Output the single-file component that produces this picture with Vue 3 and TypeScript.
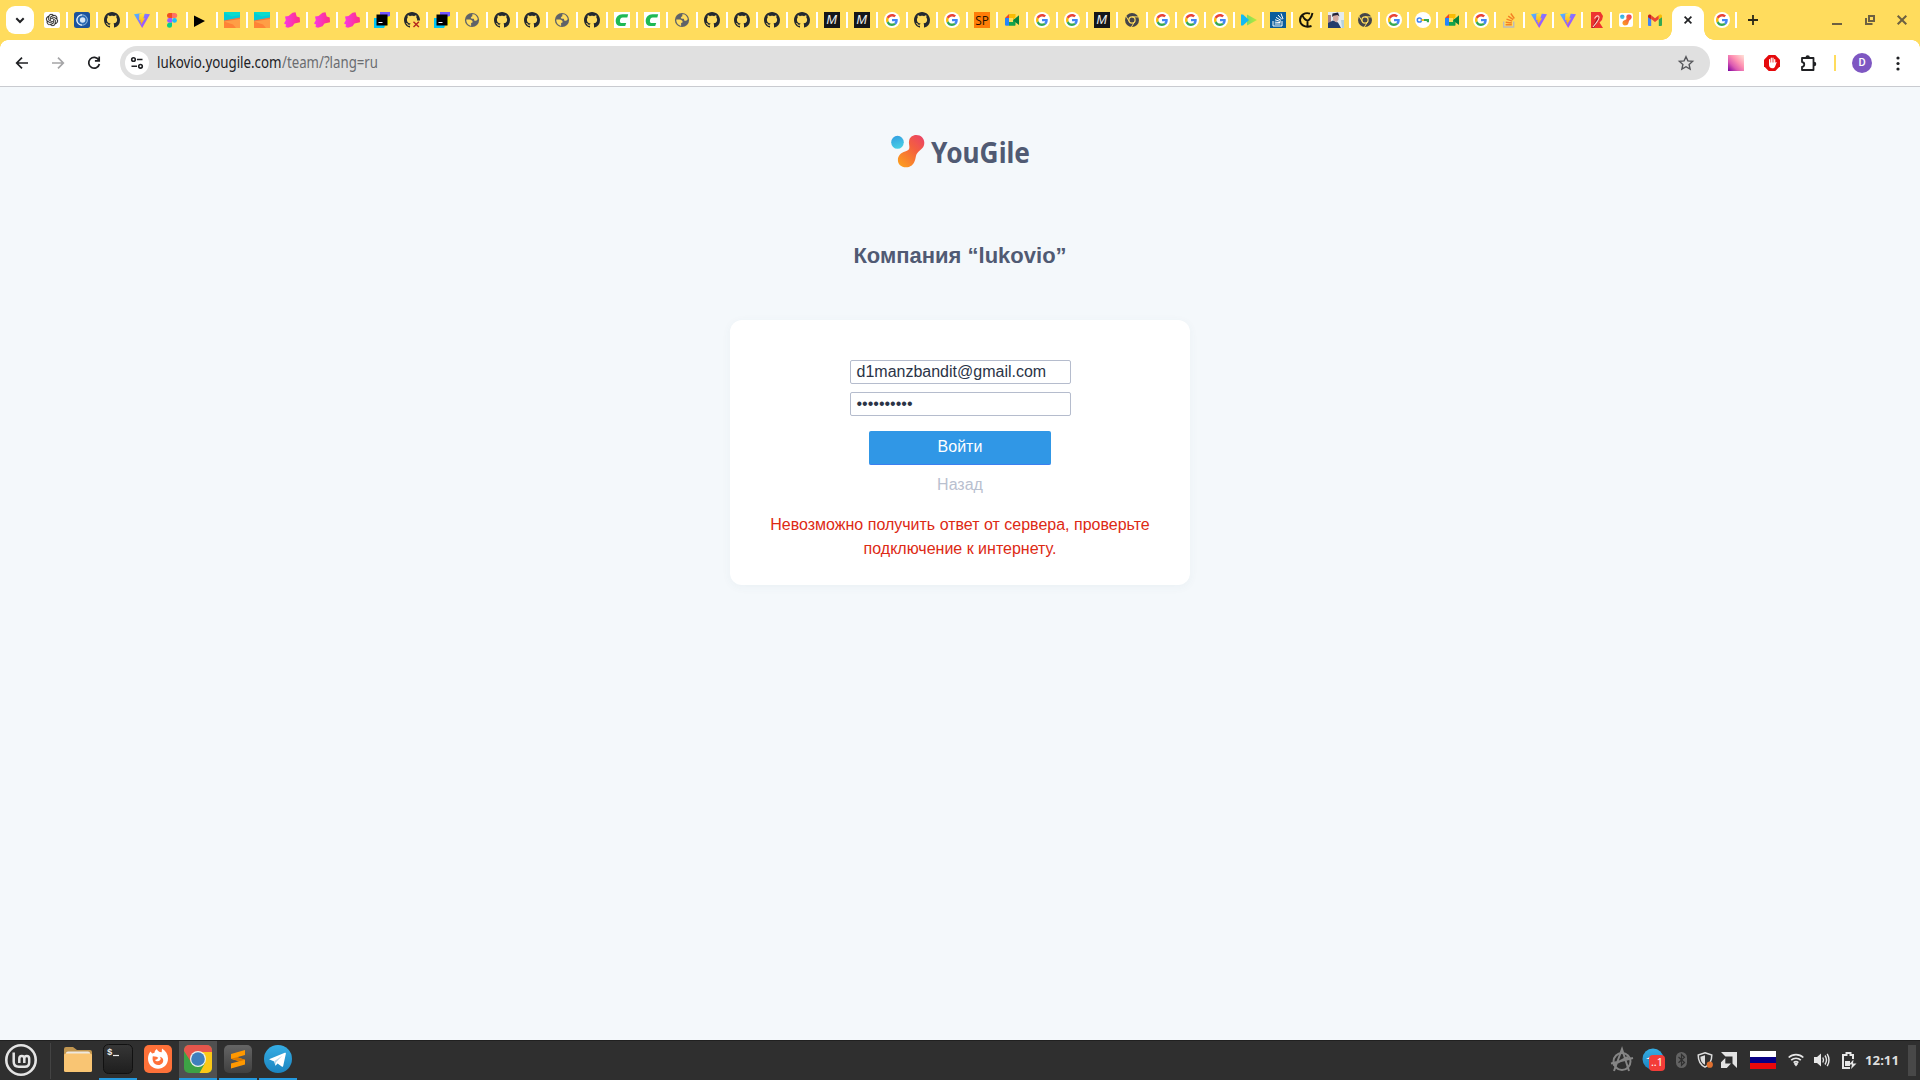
<script setup lang="ts">
import { ref } from 'vue'

const icons: string[] = [
  'gpt', 'orbit', 'github', 'vite', 'figma', 'play', 'poly', 'poly', 'pink', 'pink',
  'pink', 'jb', 'githubx', 'jb', 'globe', 'github', 'github', 'globe', 'github', 'ci',
  'ci', 'globe', 'github', 'github', 'github', 'github', 'mm', 'mm', 'google', 'github',
  'google', 'sp', 'meet', 'google', 'google', 'mm', 'chromium', 'google', 'google', 'google',
  'stream', 'stack', 'yc', 'photo', 'chromium', 'google', 'key', 'meet', 'google', 'overflow',
  'vite', 'vite', 'rocket', 'yougile', 'gmail',
]
const firstNarrow = 37
const email = ref('d1manzbandit@gmail.com')
const password = ref('••••••••••')
</script>

<template>
  <div class="screen">
    <svg class="defs" width="0" height="0" aria-hidden="true">
      <defs>
        <linearGradient id="gv" x1="0" y1="0" x2="1" y2="1"><stop offset="0" stop-color="#41c8ff" /><stop offset=".5" stop-color="#8c6cff" /><stop offset="1" stop-color="#bd34fe" /></linearGradient>
        <linearGradient id="gy" x1="0" y1="0" x2="0" y2="1"><stop offset="0" stop-color="#ffea45" /><stop offset="1" stop-color="#ffa800" /></linearGradient>
        <linearGradient id="gp" x1="0" y1="0" x2="1" y2="0"><stop offset="0" stop-color="#f838e8" /><stop offset="1" stop-color="#ff2f80" /></linearGradient>
        <linearGradient id="gr" x1="1" y1="0" x2=".2" y2="1"><stop offset="0" stop-color="#e9406a" /><stop offset=".45" stop-color="#f4603f" /><stop offset="1" stop-color="#fc9b20" /></linearGradient>
        <linearGradient id="gb" x1=".3" y1="0" x2=".6" y2="1"><stop offset="0" stop-color="#33a0e2" /><stop offset="1" stop-color="#48d0e4" /></linearGradient>
        <linearGradient id="gt" x1="0" y1="0" x2="0" y2="1"><stop offset="0" stop-color="#35ade4" /><stop offset="1" stop-color="#1b84c0" /></linearGradient>
        <linearGradient id="gs" x1="0" y1="0" x2="0" y2="1"><stop offset="0" stop-color="#656565" /><stop offset="1" stop-color="#404040" /></linearGradient>
        <linearGradient id="gk" x1="0" y1="0" x2="0" y2="1"><stop offset="0" stop-color="#363636" /><stop offset="1" stop-color="#1e1e1e" /></linearGradient>
        <linearGradient id="gst" x1="0" y1="0" x2="1" y2="0"><stop offset="0" stop-color="#7ddb63" /><stop offset="1" stop-color="#b9ea38" /></linearGradient>
        <clipPath id="tile"><rect x="1" y="1" width="28" height="28" rx="5" /></clipPath>
      </defs>
      <symbol id="i-gpt" viewBox="0 0 16 16">
        <rect width="16" height="16" rx="2" fill="#fff" />
        <path transform="translate(2 2) scale(.5)" fill="#222" stroke="#222" stroke-width=".4" d="M22.2819 9.8211a5.9847 5.9847 0 0 0-.5157-4.9108 6.0462 6.0462 0 0 0-6.5098-2.9A6.0651 6.0651 0 0 0 4.9807 4.1818a5.9847 5.9847 0 0 0-3.9977 2.9 6.0462 6.0462 0 0 0 .7427 7.0966 5.98 5.98 0 0 0 .511 4.9107 6.051 6.051 0 0 0 6.5146 2.9001A5.9847 5.9847 0 0 0 13.2599 24a6.0557 6.0557 0 0 0 5.7718-4.2058 5.9894 5.9894 0 0 0 3.9977-2.9001 6.0557 6.0557 0 0 0-.7475-7.0729zm-9.022 12.6081a4.4755 4.4755 0 0 1-2.8764-1.0408l.1419-.0804 4.7783-2.7582a.7948.7948 0 0 0 .3927-.6813v-6.7369l2.02 1.1686a.071.071 0 0 1 .038.052v5.5826a4.504 4.504 0 0 1-4.4945 4.4944zm-9.6607-4.1254a4.4708 4.4708 0 0 1-.5346-3.0137l.142.0852 4.783 2.7582a.7712.7712 0 0 0 .7806 0l5.8428-3.3685v2.3324a.0804.0804 0 0 1-.0332.0615L9.74 19.9502a4.4992 4.4992 0 0 1-6.1408-1.6464zM2.3408 7.8956a4.485 4.485 0 0 1 2.3655-1.9728V11.6a.7664.7664 0 0 0 .3879.6765l5.8144 3.3543-2.0201 1.1685a.0757.0757 0 0 1-.071 0l-4.8303-2.7865A4.504 4.504 0 0 1 2.3408 7.872zm16.5963 3.8558L13.1038 8.364 15.1192 7.2a.0757.0757 0 0 1 .071 0l4.8303 2.7913a4.4944 4.4944 0 0 1-.6765 8.1042v-5.6772a.79.79 0 0 0-.407-.667zm2.0107-3.0231l-.142-.0852-4.7735-2.7818a.7759.7759 0 0 0-.7854 0L9.409 9.2297V6.8974a.0662.0662 0 0 1 .0284-.0615l4.8303-2.7866a4.4992 4.4992 0 0 1 6.6802 4.66zM8.3065 12.863l-2.02-1.1638a.0804.0804 0 0 1-.038-.0567V6.0742a4.4992 4.4992 0 0 1 7.3757-3.4537l-.142.0805L8.704 5.459a.7948.7948 0 0 0-.3927.6813zm1.0976-2.3654l2.602-1.4998 2.6069 1.4998v2.9994l-2.5974 1.4997-2.6067-1.4997Z" />
      </symbol>
      <symbol id="i-orbit" viewBox="0 0 16 16">
        <rect width="16" height="16" rx="2.5" fill="#1b539c" />
        <circle cx="8.2" cy="8" r="5.2" fill="#2b6bb4" stroke="#8db8e0" stroke-width="1" />
        <path d="M8 2.8a5.2 5.2 0 0 0 0 10.4" fill="none" stroke="#e8f2fa" stroke-width="1.2" />
        <circle cx="8.600" cy="8" r="2.700" fill="#d6e7f6" />
      </symbol>
      <symbol id="i-github" viewBox="0 0 16 16">
        <path fill="#24292f" d="M8 0C3.58 0 0 3.58 0 8c0 3.54 2.29 6.53 5.47 7.59.4.07.55-.17.55-.38 0-.19-.01-.82-.01-1.49-2.01.37-2.53-.49-2.69-.94-.09-.23-.48-.94-.82-1.13-.28-.15-.68-.52-.01-.53.63-.01 1.08.58 1.23.82.72 1.21 1.87.87 2.33.66.07-.52.28-.87.51-1.07-1.78-.2-3.64-.89-3.64-3.95 0-.87.31-1.59.82-2.15-.08-.2-.36-1.02.08-2.12 0 0 .67-.21 2.2.82.64-.18 1.32-.27 2-.27s1.36.09 2 .27c1.53-1.04 2.2-.82 2.2-.82.44 1.1.16 1.92.08 2.12.51.56.82 1.27.82 2.15 0 3.07-1.87 3.75-3.65 3.95.29.25.54.73.54 1.48 0 1.07-.01 1.93-.01 2.2 0 .21.15.46.55.38A8.01 8.01 0 0 0 16 8c0-4.42-3.58-8-8-8z" />
      </symbol>
      <symbol id="i-githubx" viewBox="0 0 16 16">
        <use href="#i-github" width="16" height="16" />
        <rect x="8" y="8.5" width="8" height="7.5" fill="#ffdc5d" />
        <path d="M9.5 9.8l5.4 5.2M14.9 9.8L9.5 15" stroke="#b3261e" stroke-width="1.4" />
      </symbol>
      <symbol id="i-vite" viewBox="0 0 16 16">
        <path d="M0 2.2l6.9-1 9.1 1L8.2 16z" fill="url(#gv)" />
        <path d="M11 .6L5.4 1.7 5 8.2l1.7-.4-.6 2.5 1.2-.3-.6 3.2L11 6.2l-1.7.3L11 .6z" fill="url(#gy)" />
      </symbol>
      <symbol id="i-figma" viewBox="0 0 16 16">
        <path d="M8 1H5.5a2.5 2.5 0 0 0 0 5H8z" fill="#f24e1e" />
        <path d="M8 1h2.7a2.5 2.5 0 0 1 0 5H8z" fill="#ff7262" />
        <path d="M8 6H5.5a2.4 2.4 0 0 0 0 4.8H8z" fill="#a259ff" />
        <circle cx="10.5" cy="8.4" r="2.4" fill="#1abcfe" />
        <path d="M8 10.8H5.5A2.5 2.5 0 1 0 8 13.3z" fill="#0acf83" />
      </symbol>
      <symbol id="i-play" viewBox="0 0 16 16"><path d="M0 3.4L11 9 0 15z" fill="#000" /></symbol>
      <symbol id="i-poly" viewBox="0 0 16 16">
        <path d="M0 0h16v6L0 9z" fill="#08dccb" /><path d="M0 1l8 3.500 8-1.500v3L0 9z" fill="#06c9d6" />
        <path d="M0 9l16-3v10H0z" fill="#ff9e45" /><path d="M0 9.500l9 3L12 16H0z" fill="#ff8336" /><path d="M0 8.500l16-3V7L0 9.500z" fill="#f3783d" />
      </symbol>
      <symbol id="i-pink" viewBox="0 0 16 16"><path d="M1 4.500L4.500 4 8.500.8l3-.6 1.200 4.300 3 1 .3 4.800-5.500 1.200-2 2.700-4.500 1.600-2.500-.8L2 12.500 0 11.500l1.800-3.200z" fill="url(#gp)" /></symbol>
      <symbol id="i-jb" viewBox="0 0 16 16">
        <path d="M6 0h10v6l-2 3-8-2z" fill="#7256ff" /><path d="M0 6h5l6 8-1 2H0z" fill="#00c4f4" /><path d="M12 5l4-1v7l-5 4z" fill="#f7ee10" />
        <rect x="2.5" y="2.5" width="11" height="11" /><path d="M4.5 10.500h4" stroke="#fff" />
      </symbol>
      <symbol id="i-globe" viewBox="0 0 16 16">
        <circle cx="8" cy="8" r="7.1" fill="#5f6368" />
        <path d="M2.300 7.500h3.800c1 0 1.400 1 2.400 1.400v1.500l-1.400.7v2.800c-2.900-.7-5-3.200-4.800-6.400zM8 2.400l2-.2c2 .8 3.400 2.600 3.800 5l-1.600 1.600H10.400L9.800 6.700H7.500L6.800 5.200 8.500 4z" fill="#ffdc5d" />
      </symbol>
      <symbol id="i-ci" viewBox="0 0 16 16"><rect width="16" height="16" fill="#fff" /><path d="M14.200 2.200H8.500C4.200 2.200 1.700 5.200 1.700 9.300c0 3 1.800 4.700 4.800 4.700h4.700l1-3H7.800c-1.300 0-1.900-.7-1.900-1.800 0-2.200 1-3.700 2.900-3.700h4.500z" fill="#1eb955" /></symbol>
      <symbol id="i-google" viewBox="0 0 16 16">
        <circle cx="8" cy="8" r="8" fill="#fff" />
        <g transform="translate(2 2) scale(.25)">
          <path fill="#EA4335" d="M24 9.500c3.540 0 6.710 1.220 9.210 3.600l6.850-6.850C35.900 2.380 30.470 0 24 0 14.620 0 6.510 5.380 2.560 13.220l7.980 6.190C12.430 13.720 17.740 9.500 24 9.500z" />
          <path fill="#4285F4" d="M46.980 24.550c0-1.570-.15-3.090-.38-4.550H24v9.020h12.940c-.58 2.960-2.260 5.480-4.780 7.180l7.730 6c4.510-4.180 7.090-10.360 7.090-17.650z" />
          <path fill="#FBBC05" d="M10.530 28.590c-.48-1.450-.76-2.990-.76-4.590s.27-3.140.76-4.590l-7.980-6.190C.92 16.460 0 20.120 0 24c0 3.880.92 7.540 2.560 10.780l7.970-6.190z" />
          <path fill="#34A853" d="M24 48c6.480 0 11.930-2.130 15.890-5.810l-7.730-6c-2.150 1.450-4.920 2.300-8.160 2.300-6.260 0-11.570-4.220-13.470-9.910l-7.980 6.190C6.510 42.620 14.620 48 24 48z" />
        </g>
      </symbol>
      <symbol id="i-meet" viewBox="0 0 16 16">
        <path d="M1 6l4-4v4z" fill="#ea4335" /><path d="M5 2h6.500v3.500L9 8V6H5z" fill="#fbbc04" /><path d="M1 6h4v7.700H2.300A1.300 1.300 0 0 1 1 12.400z" fill="#2684fc" />
        <path d="M5 10h4V8l2.500-1.500v6.300c0 .6-.3 1-1 1H5z" fill="#13a34c" /><path d="M9.500 8L15 3.200v9.900L11 10z" fill="#08833b" /><path d="M5 6h4v4H5z" fill="#ffdc5d" />
      </symbol>
      <symbol id="i-chromium" viewBox="0 0 16 16">
        <circle cx="8" cy="8" r="7" fill="#45454a" />
        <circle cx="8" cy="8" r="3.100" fill="none" stroke="#ffdc5d" stroke-width="1.200" />
        <path d="M8 4.900h6.800M5.300 9.600L1.900 4M10.700 9.600L7.400 15" stroke="#ffdc5d" stroke-width="1" />
      </symbol>
      <symbol id="i-stream" viewBox="0 0 16 16"><path d="M6 2.500L16 8 6 13.500z" fill="url(#gst)" /><path d="M0 2.500h2l6 5.500-6 5.500H0z" fill="#12b9f2" /></symbol>
      <symbol id="i-stack" viewBox="0 0 16 16">
        <rect width="16" height="16" fill="#0b5c9c" />
        <path d="M3 9v5h9V9M4.700 12h5.800M4.700 10.100l5.800.5M5 7.800l5.600 1.700M6 5.400l5 3M8 3l4 4.500M11 1.500l2 5.500" fill="none" stroke="#fff" stroke-width="1" />
      </symbol>
      <symbol id="i-yc" viewBox="0 0 16 16"><path d="M11 1.600C6 0 1 3 1 8s5 8.200 11.500 6M3.500 3.500C5 7 7.500 8.500 8.500 8.500S12.500 6 13.500 1M8.500 8v6" fill="none" stroke="#15130a" stroke-width="1.900" /></symbol>
      <symbol id="i-photo" viewBox="0 0 16 16">
        <rect width="16" height="16" fill="#e4ecf0" /><path d="M0 3h3v9H0z" fill="#a77f85" /><path d="M0 11l5-2.500 5 2 3 5.500H0z" fill="#233d6b" />
        <path d="M5 3h5.500v4.500l-2 3L5 8z" fill="#d3a9a0" /><path d="M4 5l.5-3.500L10 .5l1.500 4-2-1.500-4 .8z" fill="#222337" /><path d="M13 8h3v8h-2z" fill="#b4d1df" />
      </symbol>
      <symbol id="i-key" viewBox="0 0 16 16">
        <circle cx="8" cy="8" r="8" fill="#fff" /><circle cx="4.400" cy="8" r="2.100" fill="none" stroke="#4285f4" stroke-width="1.500" />
        <path d="M6.500 7.100H9v1.800H6.500z" fill="#fbbc04" /><path d="M9 7.100h5v3.200h-2.200V8.900H9z" fill="#34a853" />
      </symbol>
      <symbol id="i-overflow" viewBox="0 0 16 16">
        <path d="M1.700 9.500V15h10V9.500" fill="none" stroke="#bcbbbb" stroke-width="1.400" />
        <path d="M3.600 12.700h6.200M3.700 10.300l6.200.7M4.500 7.200l5.700 2M6.200 4.100l5 3.500M8.800 1.500l3.500 5" stroke="#f48024" stroke-width="1.400" />
      </symbol>
      <symbol id="i-rocket" viewBox="0 0 16 16">
        <path d="M2 0h9.500L14 4l-1 4-2.500 2.500L14 16H2z" fill="#ee3430" /><path d="M8 5.500L10 7l-5 9H3z" fill="#a71929" /><path d="M5.500 6.500Q8 2.800 9.800 4.300T4 15" fill="none" stroke="#ffd9cc" stroke-width="1.100" />
      </symbol>
      <symbol id="i-logo" viewBox="0 0 34 33">
        <ellipse cx="6.500" cy="7.300" rx="6.300" ry="6.500" fill="url(#gb)" />
        <path d="M25.300 0c4.800 0 8 3.500 8 7.700 0 5-3.500 6.500-6.500 9.700-2.300 2.500-1.600 4.800-3.100 8.500-1.600 4-4.300 6.300-8.800 6.300-4.800 0-8-3-8-7.300 0-4.600 3.100-7.200 7.200-8.500 2.800-.9 4.200-1.400 4.300-4.100.1-2.500-.9-4-.3-6.600C18.700 2.300 21.500 0 25.300 0z" fill="url(#gr)" />
      </symbol>
      <symbol id="i-yougile" viewBox="0 0 16 16"><rect x="1" y="1" width="14" height="14" rx="2" fill="#fff" /><use href="#i-logo" x="2" y="2.200" width="12" height="11.600" /></symbol>
      <symbol id="i-gmail" viewBox="0 0 16 16">
        <path d="M1 4.600l3.200 2.300V14H2a1 1 0 0 1-1-1z" fill="#4285f4" /><path d="M15 4.600l-3.200 2.300V14H14a1 1 0 0 0 1-1z" fill="#34a853" />
        <path d="M4.200 3.300L8 6.200l3.800-2.900v3.800L8 10 4.200 7.100z" fill="#ea4335" /><path d="M1 4v1.200l3.200 2.300V3.300l-.6-.5C2.500 2 1 2.700 1 4z" fill="#c5221f" /><path d="M15 4v1.200l-3.200 2.300V3.300l.6-.5C13.500 2 15 2.700 15 4z" fill="#fbbc04" />
      </symbol>
    </svg>

    <header class="tabs">
      <button class="tabsearch"><svg width="10" height="7" viewBox="0 0 10 7"><path d="M1.300 1.300L5 5l3.700-3.700" fill="none" stroke="#202124" stroke-width="2" /></svg></button>
      <div class="strip">
        <div v-for="(icon, i) in icons" :key="i" class="tab" :class="{ narrow: i >= firstNarrow }">
          <svg v-if="icon === 'sp'" class="spfav" width="16" height="16"><rect width="16" height="16" fill="#ff7d08" /><text x="1.200" y="12.800" textLength="13.600" lengthAdjust="spacingAndGlyphs">SP</text></svg>
          <svg v-else-if="icon === 'mm'" class="mmfav" width="16" height="16"><rect width="16" height="16" fill="#14161a" /><text x="2.500" y="12.400" textLength="10.500" lengthAdjust="spacingAndGlyphs">M</text></svg>
          <svg v-else class="fav" width="16" height="16"><use :href="'#i-' + icon" width="16" height="16" /></svg>
          <i v-if="i < icons.length - 1" class="sep" />
        </div>
      </div>
      <div class="active">
        <svg class="close" width="8" height="8" viewBox="0 0 8 8"><path d="M.6.6l6.800 6.800M7.400.6L.6 7.400" stroke="#202124" stroke-width="1.700" /></svg>
      </div>
      <svg class="last" width="16" height="16"><use href="#i-google" width="16" height="16" /></svg>
      <i class="lastsep" />
      <svg class="plus" width="12" height="12" viewBox="0 0 12 12"><path d="M6 1v10M1 6h10" stroke="#2b2718" stroke-width="1.800" /></svg>
      <div class="winctl">
        <svg width="10" height="12" viewBox="0 0 10 12"><path d="M0 10h10" stroke="#6d6041" stroke-width="2" /></svg>
        <svg width="10" height="12" viewBox="0 0 10 12"><path d="M4 2h5v5H4zM1 4v6h6.500" fill="none" stroke="#6d6041" stroke-width="2" /></svg>
        <svg width="10" height="12" viewBox="0 0 10 12"><path d="M.7 1.700l8.600 8.600M9.300 1.700L.7 10.300" stroke="#6d6041" stroke-width="2" /></svg>
      </div>
    </header>

    <nav class="toolbar">
      <svg class="nav" width="16" height="16" viewBox="0 0 16 16"><path d="M14 8H3M8 2.700L2.700 8 8 13.300" fill="none" stroke="#1f2023" stroke-width="1.700" /></svg>
      <svg class="nav fwd" width="16" height="16" viewBox="0 0 16 16"><path d="M2 8h11M8 2.700L13.300 8 8 13.300" fill="none" stroke="#a5a5a7" stroke-width="1.700" /></svg>
      <svg class="nav" width="16" height="16" viewBox="0 0 16 16"><path d="M12.800 5A5.400 5.400 0 1 0 13.400 9M13.200 1.500v4.300H8.900" fill="none" stroke="#1f2023" stroke-width="1.700" /></svg>
      <div class="omnibox">
        <span class="site"><svg width="14" height="14" viewBox="0 0 14 14"><g fill="none" stroke="#1f2023" stroke-width="1.600"><circle cx="3.500" cy="3.500" r="1.800" /><path d="M7 3.500h5.500M1.500 10.300H7" /><circle cx="10.500" cy="10.300" r="1.800" /></g></svg></span>
        <svg class="url host" width="125" height="24"><text x="0" y="17" textLength="124.500" lengthAdjust="spacingAndGlyphs">lukovio.yougile.com</text></svg>
        <svg class="url path" width="98" height="24"><text x="0" y="17" textLength="96" lengthAdjust="spacingAndGlyphs">/team/?lang=ru</text></svg>
        <svg class="star" width="16" height="16" viewBox="0 0 16 16"><path d="M8 1.700l1.900 4.200 4.700.5-3.500 3.100 1 4.600L8 11.700l-4.100 2.400 1-4.600-3.500-3.100 4.700-.5z" fill="none" stroke="#55565a" stroke-width="1.400" /></svg>
      </div>
      <span class="ext1" />
      <svg class="ext2" width="16" height="16" viewBox="0 0 16 16">
        <path d="M4.700 0h6.600L16 4.700v6.600L11.300 16H4.700L0 11.300V4.700z" fill="#e5090c" />
        <path d="M5.600 8.500V4.600M7.300 8V3.200M9 8V3.200M10.700 8.500V4.600" stroke="#fff" stroke-width="1.200" stroke-linecap="round" /><path d="M5 7.500h6.300l1.500-.5-1.500 4c-.5 1.500-1.400 2.300-3 2.300-2.100 0-3.300-1.500-3.300-3.500z" fill="#fff" />
      </svg>
      <svg class="ext3" width="17" height="17" viewBox="0 0 17 17"><path d="M2 3h11.500v12H2v-3.200c3-.5 3-4.300 0-4.800z" fill="none" stroke="#1f2023" stroke-width="1.800" stroke-linejoin="round" /><path d="M5.500 2.500a2.200 2.200 0 0 1 4.400 0zM14 6.700a2.300 2.300 0 0 1 0 4.600z" fill="#1f2023" /></svg>
      <i class="bar" />
      <span class="avatar">D</span>
      <svg class="kebab" width="4" height="15" viewBox="0 0 4 15"><circle cx="2" cy="2" r="1.600" /><circle cx="2" cy="7.500" r="1.600" /><circle cx="2" cy="13" r="1.600" /></svg>
    </nav>

    <main class="page">
      <div class="brand">
        <svg class="mark" width="34" height="33"><use href="#i-logo" width="34" height="33" /></svg>
        <svg class="word" width="102" height="36"><text x="1" y="28" textLength="99" lengthAdjust="spacingAndGlyphs">YouGile</text></svg>
      </div>
      <h1>Компания “lukovio”</h1>
      <section class="card">
        <div class="field">{{ email }}</div>
        <div class="field pass">{{ password }}</div>
        <button class="login">Войти</button>
        <a class="back">Назад</a>
        <p class="error">Невозможно получить ответ от сервера, проверьте подключение к интернету.</p>
      </section>
    </main>

    <footer class="panel">
      <svg class="mint" width="32" height="32" viewBox="0 0 32 32"><g fill="none" stroke="#e4e4e4"><circle cx="16" cy="16" r="14.700" stroke-width="2.600" /><path d="M8.700 8.500v9.200c0 3.200 1.800 5 5 5h6.200c3 0 4.300-1.800 4.300-4.500v-3.500c0-1.600-1-2.600-2.400-2.600-1.500 0-2.500 1-2.500 2.600V19m0-4.300c0-1.600-1-2.600-2.500-2.600s-2.500 1-2.500 2.600V19" stroke-width="2.500" /></g></svg>
      <i class="div" />
      <div class="task"><svg width="30" height="30" viewBox="0 0 30 30"><path d="M1 5q0-2 2-2h7l4 3h13q2 0 2 2v8H1z" fill="#c19650" /><path d="M3 9q0-1.500 2-1.500h20q2 0 2 1.500v5H3z" fill="#eee8de" /><rect x="1" y="9.500" width="28" height="18.500" rx="1.500" fill="#f9c573" /></svg></div>
      <div class="task on"><svg width="30" height="30" viewBox="0 0 30 30"><rect x=".5" y=".5" width="29" height="29" rx="5" fill="url(#gk)" stroke="#111" /><text x="4" y="11" font-family="Liberation Mono, monospace" font-weight="700" font-size="9" fill="#eee">$</text><path d="M10 11.500h6" stroke="#eee" stroke-width="1.200" /></svg></div>
      <div class="task"><svg width="30" height="30" viewBox="0 0 30 30"><rect x="1" y="1" width="28" height="28" rx="5" fill="#ff7139" /><path d="M7.500 7.500l1.700 2 2.300-.8c.2-1.700 1-2.800 2.400-3.700.4 1.500 1.500 2.300 3 3l1.800.2.300-3.700c3.800 2.200 6 5.700 6 9.900 0 6-4.500 10.300-10 10.300S5 20.500 5 14.700c0-2.900.9-5.200 2.500-7.200z" fill="#fff" /><path d="M9.800 12.300l3.700.4 1.800 1.100-1.300 1.500-2 .6c.8 1.600 3.600 1.900 5 .4 1-1.100.9-2.500-.3-3.500 3.200.6 4.200 3.200 3.200 5.400-.9 1.900-2.700 2.800-4.800 2.800-3.900 0-6.300-3.900-5.300-8.700z" fill="#ff7139" /></svg></div>
      <div class="task on current"><svg width="30" height="30" viewBox="0 0 30 30"><g clip-path="url(#tile)"><rect width="30" height="30" fill="#3da245" /><path d="M0 0h30v8H15L8 18 1 7z" fill="#e6564c" /><path d="M15 8h15v22H16l6-11z" fill="#fbc817" /></g><circle cx="15" cy="15" r="8" fill="#eef2ec" /><circle cx="15" cy="15" r="6.800" fill="#3f7fbd" /></svg></div>
      <div class="task on"><svg width="30" height="30" viewBox="0 0 30 30"><rect x="1" y="1" width="28" height="28" rx="5" fill="url(#gs)" /><path d="M8 9.900l14-4v5l-8 2.300 8 2.500v4.900L8 24.600v-5l8-2.300-8-2.500z" fill="#ff9800" /><path d="M8 14.800l6-1.600 8 2.500-5 1.600z" fill="#d97700" /></svg></div>
      <div class="task on"><svg width="30" height="30" viewBox="0 0 30 30"><circle cx="15" cy="15" r="14" fill="url(#gt)" /><path d="M6 15.300L21.800 8.800c.8-.3 1.300.1 1 1.100l-2.600 12c-.2.900-.8 1.100-1.500.7l-4.100-3-2.200 2.200-1.200-4.400z" fill="#fff" /><path d="M11.500 17l8-5.500-6.500 6.700-.3 3.400z" fill="#b8d9ec" /></svg></div>
      <div class="tray">
        <svg class="t1" width="24" height="24" viewBox="0 0 24 24"><g fill="none" stroke="#858585"><circle cx="12" cy="13.500" r="8.500" stroke-width="2" /><path d="M4 23L12 1l7 22M1 15.500l22-5.500M3 17l15-8" stroke-width="2" /></g></svg>
        <div class="t2"><svg width="22" height="22" viewBox="0 0 22 22"><circle cx="11" cy="11" r="10.500" fill="url(#gt)" /><path d="M4 11l8-4v4z" fill="#fff" /></svg><span>..1</span></div>
        <svg class="t3" width="11" height="16" viewBox="0 0 11 16"><rect width="11" height="16" rx="5.500" fill="#626262" /><path d="M2.500 5l6 5.500-3 2.800V2.500l3 2.800-6 5.400" fill="none" stroke="#303030" stroke-width="1.200" /></svg>
        <svg class="t4" width="16" height="16" viewBox="0 0 16 16"><path d="M8 .8l6.800 2.300c0 6-1.800 9.800-6.800 12-5-2.200-6.800-6-6.800-12z" fill="#2f2f2f" stroke="#ddd" stroke-width="1.500" /><path d="M8 3.300L3.400 4.800c.2 4 1.300 6.400 4.600 8z" fill="#ddd" /><circle cx="12.800" cy="12.700" r="3.100" fill="#df7030" /></svg>
        <svg class="t5" width="16" height="16" viewBox="0 0 16 16"><path d="M0 0h16v16l-4.500-4.500v-7h-7zM4.300 6v5.500H10L5.800 16H0v-5.800z" fill="#e3e3e3" /></svg>
        <div class="flag"><i /><i /><i /></div>
        <svg class="t6" width="16" height="14" viewBox="0 0 16 14"><path d="M.7 4.500a10.500 10.500 0 0 1 14.600 0M3.200 7.200a6.900 6.900 0 0 1 9.600 0M5.600 9.600a3.600 3.600 0 0 1 4.800 0" fill="none" stroke="#e6e6e6" stroke-width="1.700" /><path d="M5.800 10.800L8 13.500l2.200-2.700C9 9.500 7 9.500 5.800 10.800z" fill="#e6e6e6" /></svg>
        <svg class="t7" width="16" height="14" viewBox="0 0 16 14"><path d="M0 4h3l4-3.500v13L3 10H0z" fill="#e6e6e6" /><path d="M8.800 4.500q1.500 2.500 0 5M11 2.500q3 4.500 0 9M13.200.8q3.600 6.200 0 12.400" fill="none" stroke="#e6e6e6" stroke-width="1.400" /></svg>
        <svg class="t8" width="15" height="17" viewBox="0 0 15 17"><path d="M11 7V3H8.500V1h-4v2H1v13h7" fill="none" stroke="#e6e6e6" stroke-width="2" /><path d="M3 9h5v5H3z" fill="#e6e6e6" /><path d="M11.500 7.500L7 12.500h3L9 17l5.500-5.500H11z" fill="#e6e6e6" /></svg>
        <svg class="clock" width="35" height="20"><text x="0" y="15" textLength="34" lengthAdjust="spacingAndGlyphs">12:11</text></svg>
        <i class="show" />
      </div>
    </footer>
  </div>
</template>

<style>
body { margin: 0; overflow: hidden; }
</style>

<style scoped>
.screen { width: 1920px; height: 1080px; display: flex; flex-direction: column; background: #f4f8fb; font-family: "Liberation Sans", Arial, sans-serif; overflow: hidden; }
.screen svg { display: block; flex: none; overflow: visible; }
.defs { position: absolute; }
button { border: 0; padding: 0; font: inherit; }
.tabs { height: 40px; flex: none; background: #ffdc5d; display: flex; align-items: center; }
.tabsearch { width: 28px; height: 28px; margin: 0 10px 0 6px; border-radius: 9px; background: #fff; display: flex; align-items: center; justify-content: center; flex: none; }
.strip { display: flex; flex: none; width: 1628px; }
.tab { width: 30px; flex: none; display: flex; align-items: center; }
.tab.narrow { width: 29px; }
.spfav { font: 12.5px "Open Sans", sans-serif; fill: #231000; }
.spfav text { fill: #231000; }
.mmfav { font: italic 12.5px "Liberation Sans", sans-serif; }
.mmfav text { fill: #f0f0f0; }
.sep, .lastsep { width: 2px; height: 16px; background: #fff; margin-left: 6px; flex: none; }
.narrow .sep { margin-left: 5px; }
.active { position: relative; width: 32px; height: 34px; align-self: flex-end; background: #fff; border-radius: 9px 9px 0 0; display: flex; justify-content: center; flex: none; }
.active::before, .active::after { content: ""; position: absolute; bottom: 0; width: 10px; height: 10px; }
.active::before { left: -10px; background: radial-gradient(circle at 0 0, transparent 9.5px, #fff 10px); }
.active::after { right: -10px; background: radial-gradient(circle at 100% 0, transparent 9.5px, #fff 10px); }
.close { margin-top: 10px; }
.last { margin-left: 10px; }
.lastsep { margin-left: 5px; }
.plus { margin-left: 10px; }
.winctl { display: flex; gap: 22.5px; margin-left: auto; margin-right: 13px; }
.toolbar { height: 46px; flex: none; border-bottom: 1px solid #c9cbd0; display: flex; align-items: center; background: radial-gradient(circle at 8px 8px, #fff 7.5px, #ffdc5d 8px) 0 0 / 8px 8px no-repeat, radial-gradient(circle at 0 8px, #fff 7.5px, #ffdc5d 8px) 100% 0 / 8px 8px no-repeat, #fff; }
.nav { margin-left: 14px; }
.nav.fwd { margin: 0 6px 0 20px; }
.omnibox { width: 1590px; height: 34px; margin-left: 18px; border-radius: 17px; background: #e0e0e0; display: flex; align-items: center; flex: none; }
.site { width: 24px; height: 24px; margin-left: 5px; border-radius: 50%; background: #fff; display: flex; align-items: center; justify-content: center; }
.url { font: 15.5px "Noto Sans", sans-serif; }
.host { margin-left: 8px; fill: #202124; }
.path { fill: #6a6c70; }
.star { margin-left: auto; margin-right: 16px; }
.ext1 { width: 16px; height: 16px; margin-left: 18px; background: linear-gradient(45deg, #7a00a0 0%, #dc5bb2 32%, #ff93b2 60%, #ffe5d8 100%); }
.ext2 { margin-left: 20px; }
.ext3 { margin-left: 20px; }
.bar { width: 2px; height: 16px; margin-left: 17px; background: #ffdc5d; }
.avatar { width: 20px; height: 20px; margin-left: 16px; border-radius: 50%; background: #7e57c2; color: #fff; font: 500 11px/20px Roboto, sans-serif; text-align: center; }
.kebab { margin-left: 24px; fill: #1f2023; }
.page { flex: 1; display: flex; flex-direction: column; align-items: center; background: #f4f8fb; }
.brand { display: flex; height: 36px; margin-top: 47px; align-items: flex-start; margin-left: 2px; }
.word { margin: 1px 0 0 5px; font: 700 28px "Noto Sans", sans-serif; fill: #505a73; }
.mark { margin-top: 1px; }
h1 { margin: 71px 0 49px; font-size: 22px; line-height: 30px; font-weight: 700; color: #505a73; }
.card { width: 460px; height: 265px; box-sizing: border-box; padding-top: 40px; border-radius: 12px; background: #fff; box-shadow: 0 2px 10px rgba(60, 90, 120, .05); display: flex; flex-direction: column; align-items: center; font-size: 16px; }
.field { width: 221px; height: 24px; box-sizing: border-box; margin-left: 1px; border: 1px solid #b5bccd; border-radius: 2px; background: #fff; padding-left: 5.5px; line-height: 22px; color: #2b3447; }
.pass { margin-top: 8px; }
.login { width: 182px; height: 34px; margin-top: 15px; border-bottom: 1px solid #3b7ff0; border-radius: 2px; background: #3097e6; color: #fff; font-size: 16px; line-height: 30px; padding-bottom: 1px; }
.back { margin-top: 8px; line-height: 24px; color: #b9c0cf; }
.error { width: 400px; margin: 16px 0 0; line-height: 24px; color: #dd2a14; text-align: center; }
.panel { height: 40px; box-sizing: border-box; flex: none; background: #2f2f2f; border-top: 1px solid #202020; display: flex; align-items: center; }
.mint { margin-left: 5px; margin-bottom: 2px; }
.div { width: 1px; height: 36px; margin: 0 8px 0 13px; background: #434343; }
.task { width: 38px; height: 39px; box-sizing: border-box; margin-right: 2px; padding-top: 3px; display: flex; justify-content: center; border-bottom: 2px solid transparent; }
.task.on { border-color: #2499de; }
.current { background: #505050; }
.tray { margin-left: auto; margin-bottom: 1px; display: flex; align-items: center; }
.t2 { position: relative; margin-left: 8px; width: 24px; height: 26px; padding-top: 2px; }
.t2 span { position: absolute; left: 7px; top: 9px; width: 16px; height: 16px; border-radius: 4px; background: #f33c38; color: #fff; font: 11px/14px "Noto Sans", sans-serif; text-align: center; }
.t3 { margin-left: 10px; }
.t4 { margin-left: 10px; }
.t5 { margin-left: 8px; }
.flag { width: 26px; height: 19px; margin: 0 12px 0 13px; display: flex; flex-direction: column; }
.flag i { flex: 1; background: #fff; }
.flag i:nth-child(2) { background: #080083; }
.flag i:nth-child(3) { background: #e9080a; }
.t7 { margin-left: 10px; }
.t8 { margin-left: 12px; }
.clock { margin-left: 8px; font: 700 13px "Noto Sans", sans-serif; fill: #dedede; }
.show { width: 8px; height: 31px; margin: 0 4px 0 8px; background: #484848; }
</style>
